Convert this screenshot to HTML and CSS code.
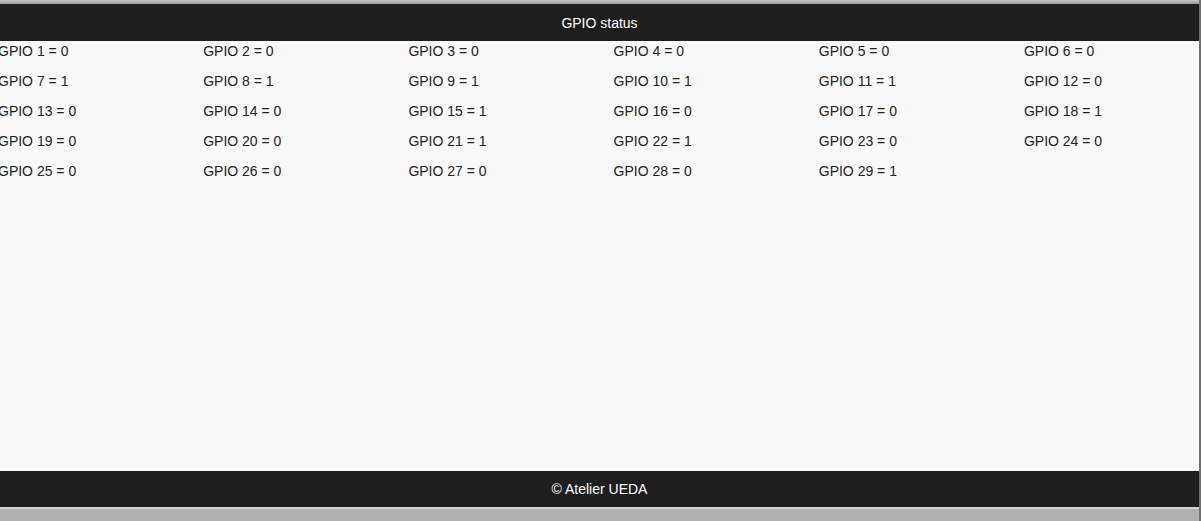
FILE: index.html
```html
<!DOCTYPE html>
<html>
<head>
<meta charset="utf-8">
<title>GPIO status</title>
<link rel="stylesheet" href="styles.css">
</head>
<body>
<div class="frame">
  <div class="page">
    <div class="chrome-top"></div>
    <header class="bar header">GPIO status</header>
    <main class="content">
      <div class="grid">
        <div class="item">GPIO 1 = 0</div>
        <div class="item">GPIO 2 = 0</div>
        <div class="item">GPIO 3 = 0</div>
        <div class="item">GPIO 4 = 0</div>
        <div class="item">GPIO 5 = 0</div>
        <div class="item">GPIO 6 = 0</div>
        <div class="item">GPIO 7 = 1</div>
        <div class="item">GPIO 8 = 1</div>
        <div class="item">GPIO 9 = 1</div>
        <div class="item">GPIO 10 = 1</div>
        <div class="item">GPIO 11 = 1</div>
        <div class="item">GPIO 12 = 0</div>
        <div class="item">GPIO 13 = 0</div>
        <div class="item">GPIO 14 = 0</div>
        <div class="item">GPIO 15 = 1</div>
        <div class="item">GPIO 16 = 0</div>
        <div class="item">GPIO 17 = 0</div>
        <div class="item">GPIO 18 = 1</div>
        <div class="item">GPIO 19 = 0</div>
        <div class="item">GPIO 20 = 0</div>
        <div class="item">GPIO 21 = 1</div>
        <div class="item">GPIO 22 = 1</div>
        <div class="item">GPIO 23 = 0</div>
        <div class="item">GPIO 24 = 0</div>
        <div class="item">GPIO 25 = 0</div>
        <div class="item">GPIO 26 = 0</div>
        <div class="item">GPIO 27 = 0</div>
        <div class="item">GPIO 28 = 0</div>
        <div class="item">GPIO 29 = 1</div>
      </div>
    </main>
    <footer class="bar footer">© Atelier UEDA</footer>
    <div class="chrome-bottom"></div>
  </div>
  <div class="edge"></div>
</div>
</body>
</html>
```

FILE: styles.css
```css
html, body {
  margin: 0;
  padding: 0;
  height: 100%;
}

body {
  font-family: "Liberation Sans", Arial, sans-serif;
  font-size: 14px;
  color: #222;
  background: #f9f9f9;
  overflow: hidden;
}

.frame {
  display: flex;
  height: 521px;
}

.page {
  flex: 1;
  display: flex;
  flex-direction: column;
  min-width: 0;
  overflow: hidden;
}

.edge {
  width: 2px;
  background: #707070;
}

.chrome-top {
  height: 4px;
  background: linear-gradient(#c4c4c4, #9c9c9c);
}

.bar {
  background: #1e1e1e;
  color: #fff;
  display: flex;
  align-items: center;
  justify-content: center;
}

.header {
  height: 37px;
}

.footer {
  height: 36px;
}

.chrome-bottom {
  height: 14px;
  background: #b0b0b0;
  border-top: 2px solid #d2d2d2;
  box-sizing: border-box;
}

.content {
  flex: 1;
  background: #f9f9f9;
}

.grid {
  display: grid;
  grid-template-columns: repeat(6, 205.2px);
  row-gap: 12px;
  margin-left: -2px;
  padding-top: 1px;
}

.item {
  line-height: 18px;
  white-space: nowrap;
}
```
